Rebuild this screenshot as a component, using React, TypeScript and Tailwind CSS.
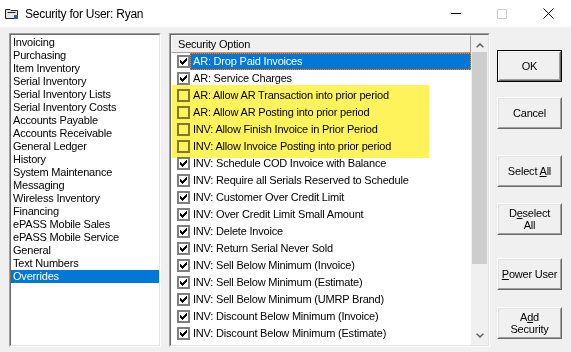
import React from "react";

const leftItems = [
  "Invoicing",
  "Purchasing",
  "Item Inventory",
  "Serial Inventory",
  "Serial Inventory Lists",
  "Serial Inventory Costs",
  "Accounts Payable",
  "Accounts Receivable",
  "General Ledger",
  "History",
  "System Maintenance",
  "Messaging",
  "Wireless Inventory",
  "Financing",
  "ePASS Mobile Sales",
  "ePASS Mobile Service",
  "General",
  "Text Numbers",
  "Overrides",
];

const options: { t: string; c: boolean }[] = [
  { t: "AR: Drop Paid Invoices", c: true },
  { t: "AR: Service Charges", c: true },
  { t: "AR: Allow AR Transaction into prior period", c: false },
  { t: "AR: Allow AR Posting into prior period", c: false },
  { t: "INV: Allow Finish Invoice in Prior Period", c: false },
  { t: "INV: Allow Invoice Posting into prior period", c: false },
  { t: "INV: Schedule COD Invoice with Balance", c: true },
  { t: "INV: Require all Serials Reserved to Schedule", c: true },
  { t: "INV: Customer Over Credit Limit", c: true },
  { t: "INV: Over Credit Limit Small Amount", c: true },
  { t: "INV: Delete Invoice", c: true },
  { t: "INV: Return Serial Never Sold", c: true },
  { t: "INV: Sell Below Minimum (Invoice)", c: true },
  { t: "INV: Sell Below Minimum (Estimate)", c: true },
  { t: "INV: Sell Below Minimum (UMRP Brand)", c: true },
  { t: "INV: Discount Below Minimum (Invoice)", c: true },
  { t: "INV: Discount Below Minimum (Estimate)", c: true },
];

const checkCols: [number, number][] = [
  [0, 2],
  [1, 3],
  [2, 4],
  [3, 3],
  [4, 2],
  [5, 1],
  [6, 0],
];

function Check({ checked }: { checked: boolean }) {
  return (
    <div className="w-[13px] h-[13px] border-2 border-[#808080] bg-white shrink-0 relative">
      {checked && (
        <svg width="9" height="9" viewBox="0 0 9 9" shapeRendering="crispEdges" className="block">
          {checkCols.map(([x, y]) => (
            <rect key={x} x={x + 1} y={y + 1} width="1" height="3" fill="#000" />
          ))}
        </svg>
      )}
    </div>
  );
}

function Btn({
  children,
  def,
  className,
}: {
  children: React.ReactNode;
  def?: boolean;
  className?: string;
}) {
  const body = (
    <div className="w-full h-full border border-t-white border-l-white border-r-[#696969] border-b-[#696969]">
      <div className="w-full h-full border border-t-[#e3e3e3] border-l-[#e3e3e3] border-r-[#a0a0a0] border-b-[#a0a0a0] flex flex-col items-center justify-center text-center leading-[12px] text-[11px] tracking-[-0.2px] text-black">
        {children}
      </div>
    </div>
  );
  return (
    <div className={"w-[65px] h-[32px] bg-[#f0f0f0] " + (className ?? "")}>
      {def ? <div className="w-full h-full border border-black">{body}</div> : body}
    </div>
  );
}

function Chevron({ up }: { up?: boolean }) {
  return (
    <svg width="8" height="5" viewBox="0 0 8 5" className="block">
      <path
        d={up ? "M0.7 4.3 L4 1 L7.3 4.3" : "M0.7 0.7 L4 4 L7.3 0.7"}
        stroke="#606060"
        strokeWidth="1.5"
        fill="none"
      />
    </svg>
  );
}

export default function App() {
  return (
    <div className="w-[571px] h-[352px] bg-[#f0f0f0] flex flex-col overflow-hidden font-['Liberation_Sans',Arial,sans-serif] text-black">
      {/* Title bar */}
      <div className="h-[27px] bg-white flex items-center shrink-0">
        <div className="ml-[5px] w-[14px] h-[12px]">
          <svg width="14" height="12" viewBox="0 0 14 12" className="block">
            <path d="M0.5 1.5 H5 L6 2.5 H12.5 V10.5 H0.5 Z" fill="#e6e6e6" stroke="#202020" />
            <path d="M2.5 4.5 H10.5" stroke="#202020" />
            <rect x="9" y="7" width="4" height="4" fill="#3b5b8a" />
          </svg>
        </div>
        <div className="ml-[6px] text-[12px] tracking-[-0.25px] text-black">Security for User: Ryan</div>
        <div className="flex-1" />
        <div className="w-[46px] h-[27px] flex items-center justify-center">
          <div className="w-[10px] h-px bg-black" />
        </div>
        <div className="w-[46px] h-[27px] flex items-center justify-center">
          <div className="w-[10px] h-[10px] border border-[#cccccc]" />
        </div>
        <div className="w-[46px] h-[27px] flex items-center justify-center">
          <svg width="11" height="11" viewBox="0 0 11 11" className="block">
            <path d="M0.5 0.5 L10.5 10.5 M10.5 0.5 L0.5 10.5" stroke="#000" strokeWidth="1" />
          </svg>
        </div>
      </div>

      {/* Body */}
      <div className="flex pl-[9px] pt-[6px]">
        {/* Left list */}
        <div className="w-[152px] h-[314px] border border-t-[#a0a0a0] border-l-[#a0a0a0] border-r-white border-b-white shrink-0">
          <div className="w-full h-full border border-t-[#696969] border-l-[#696969] border-r-[#e3e3e3] border-b-[#e3e3e3] bg-white pt-px">
            {leftItems.map((it) => {
              const sel = it === "Overrides";
              return (
                <div
                  key={it}
                  className={
                    "h-[13px] leading-[13px] pl-[2px] text-[11px] tracking-[-0.2px] whitespace-nowrap " +
                    (sel ? "bg-[#0078d7] text-white" : "text-black")
                  }
                >
                  {it}
                </div>
              );
            })}
          </div>
        </div>

        {/* List view */}
        <div className="ml-[8px] w-[321px] h-[314px] border border-t-[#a0a0a0] border-l-[#a0a0a0] border-r-white border-b-white shrink-0">
          <div className="w-full h-full border border-t-[#696969] border-l-[#696969] border-r-[#e3e3e3] border-b-[#e3e3e3] bg-white flex">
            <div className="w-[300px] flex flex-col">
              <div className="h-[18px] bg-[#f0f0f0] border border-t-white border-l-white border-r-[#a0a0a0] border-b-[#a0a0a0] flex items-center pl-[6px] text-[11px] tracking-[-0.2px]">
                Security Option
              </div>
              <div className="relative">
                {options.map((o, i) => {
                  const sel = i === 0;
                  return (
                    <div key={o.t} className="h-[17px] flex items-center pl-[6px]">
                      <Check checked={o.c} />
                      {sel ? (
                        <div className="flex-1 h-[17px] bg-[#0078d7] border border-dotted border-[#ff8728] text-white flex items-center pl-[2px] text-[11px] tracking-[-0.2px] whitespace-nowrap">
                          {o.t}
                        </div>
                      ) : (
                        <div className="flex-1 h-[17px] flex items-center pl-[3px] text-[11px] tracking-[-0.2px] whitespace-nowrap text-black">
                          {o.t}
                        </div>
                      )}
                    </div>
                  );
                })}
                <div className="absolute left-px top-[32px] w-[257px] h-[73px] bg-[#fff35c] mix-blend-multiply pointer-events-none" />
              </div>
            </div>
            {/* Scrollbar */}
            <div className="w-[17px] h-full bg-[#f0f0f0] flex flex-col">
              <div className="h-[17px] flex justify-center items-start pt-[8px]">
                <Chevron up />
              </div>
              <div className="h-[212px] mx-px bg-[#cdcdcd]" />
              <div className="flex-1" />
              <div className="h-[17px] flex justify-center items-start pt-[5px]">
                <Chevron />
              </div>
            </div>
          </div>
        </div>

        {/* Buttons */}
        <div className="ml-[7px] flex flex-col pt-[17px]">
          <Btn def>OK</Btn>
          <Btn className="mt-[15px]">Cancel</Btn>
          <Btn className="mt-[26px]">
            <span>
              Select <u>A</u>ll
            </span>
          </Btn>
          <Btn className="mt-[16px]">
            <span>
              D<u>e</u>select
            </span>
            <span>All</span>
          </Btn>
          <Btn className="mt-[23px]">
            <span>
              <u>P</u>ower User
            </span>
          </Btn>
          <Btn className="mt-[17px]">
            <span>
              A<u>d</u>d
            </span>
            <span>Security</span>
          </Btn>
        </div>
      </div>
    </div>
  );
}
